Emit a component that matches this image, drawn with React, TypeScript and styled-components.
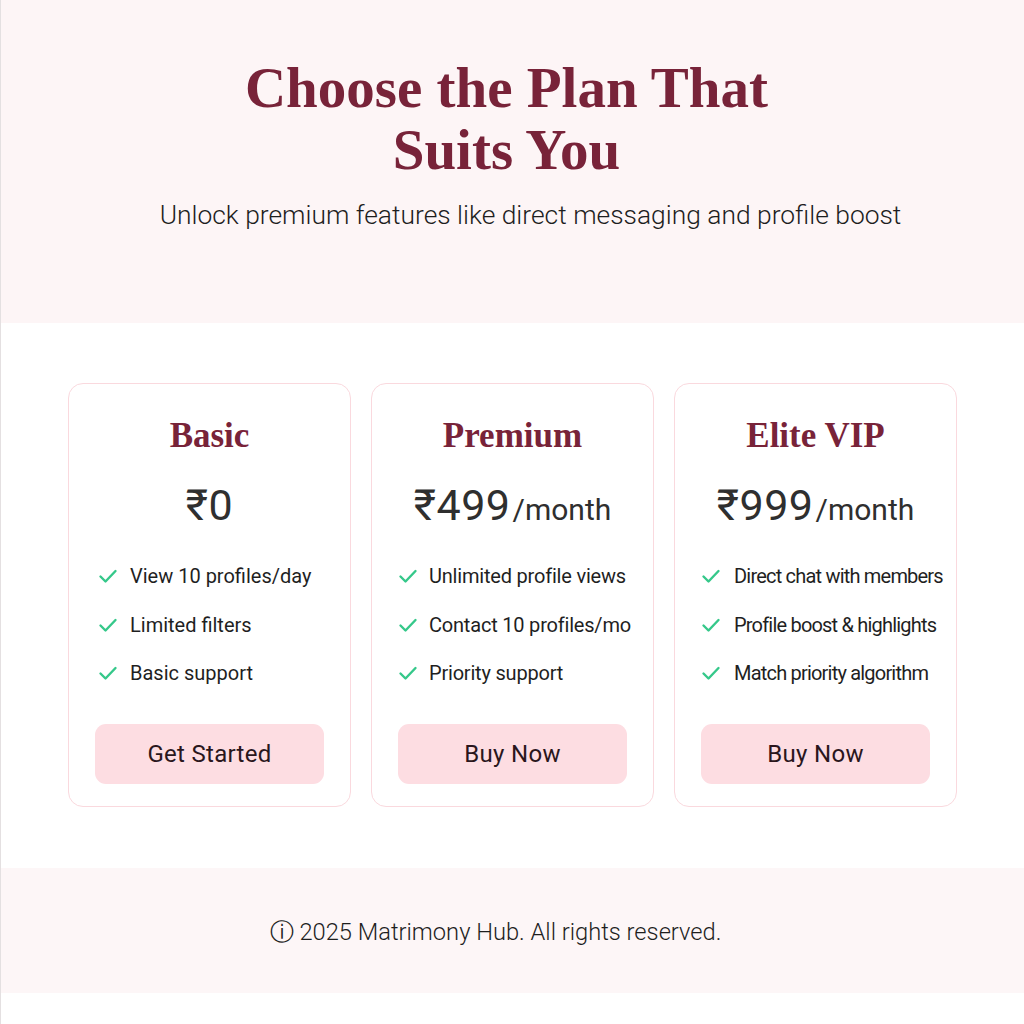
import React from "react";
import styled, { createGlobalStyle } from "styled-components";

const Global = createGlobalStyle`
  html, body { margin: 0; padding: 0; background: #ffffff; }
  body { font-family: Roboto, "Liberation Sans", sans-serif; }
  * { box-sizing: border-box; }
`;

const Page = styled.div`
  width: 1024px;
  height: 1024px;
  display: flex;
  flex-direction: column;
  background: #ffffff;
  border-left: 1px solid #e4e0e1;
`;

const Hero = styled.header`
  height: 323px;
  background: #fdf5f6;
  display: flex;
  flex-direction: column;
  align-items: center;
  padding-top: 57px;
`;

const Heading = styled.h1`
  margin: 0;
  width: 600px;
  text-align: center;
  font-family: "Liberation Serif", "DejaVu Serif", serif;
  font-weight: 700;
  font-size: 57px;
  line-height: 62px;
  color: #782339;
  transform: translateX(-6px);
`;

const Sub = styled.p`
  margin: 18px 0 0;
  font-family: Roboto, "Liberation Sans", sans-serif;
  font-weight: 300;
  font-size: 26.4px;
  line-height: 32px;
  color: #1e1e1e;
  white-space: nowrap;
  transform: translateX(18px);
`;

const Plans = styled.main`
  height: 545px;
  display: flex;
  justify-content: center;
  gap: 20px;
  padding: 60px 0 0 0;
`;

const PlanCard = styled.section`
  width: 283px;
  height: 424px;
  border: 1.5px solid #fad9de;
  border-radius: 15px;
  background: #ffffff;
  display: flex;
  flex-direction: column;
  align-items: center;
  padding: 32px 26px 22px;
`;

const PlanName = styled.h2`
  margin: 0;
  font-family: "Liberation Serif", "DejaVu Serif", serif;
  font-weight: 700;
  font-size: 35px;
  line-height: 40px;
  color: #782339;
`;

const PriceRow = styled.div`
  margin-top: 25px;
  height: 48px;
  display: flex;
  align-items: baseline;
  color: #2f2f2f;
  font-family: Roboto, "Liberation Sans", sans-serif;
`;

const Amount = styled.span`
  font-size: 43px;
  line-height: 48px;
  font-weight: 400;
  letter-spacing: 0.5px;
`;

const Period = styled.span`
  font-size: 30px;
  font-weight: 400;
  margin-left: 2px;
`;

const Features = styled.ul`
  list-style: none;
  margin: 36px 0 0;
  padding: 0;
  align-self: stretch;
  display: flex;
  flex-direction: column;
  gap: 26.5px;
`;

const Feature = styled.li<{ $indent: number; $spacing: number; $gap: number }>`
  display: flex;
  align-items: center;
  gap: ${(p) => p.$gap}px;
  padding-left: ${(p) => p.$indent}px;
  font-family: Roboto, "Liberation Sans", sans-serif;
  font-size: 20px;
  line-height: 22px;
  letter-spacing: ${(p) => p.$spacing}px;
  color: #1f1f1f;
  white-space: nowrap;
`;

const Check = styled.svg`
  width: 20px;
  height: 20px;
  flex: none;
`;

const Action = styled.button`
  margin-top: auto;
  width: 229px;
  height: 60px;
  border: none;
  border-radius: 11px;
  background: #fddde2;
  color: #2a161c;
  font-family: Roboto, "Liberation Sans", sans-serif;
  font-size: 24px;
  font-weight: 400;
  letter-spacing: 0.3px;
  cursor: pointer;
`;

const Footer = styled.footer`
  height: 125px;
  background: #fdf6f7;
  display: flex;
  align-items: center;
  justify-content: center;
`;

const FooterText = styled.p`
  margin: 0;
  font-family: Roboto, "Liberation Sans", sans-serif;
  font-weight: 300;
  font-size: 23.7px;
  color: #1e1e1e;
  white-space: nowrap;
  transform: translate(-17px, 1px);
`;

type Plan = {
  name: string;
  amount: string;
  period?: string;
  features: string[];
  cta: string;
  indent: number;
  spacing: number;
  gap: number;
};

const plans: Plan[] = [
  {
    name: "Basic",
    amount: "₹0",
    features: ["View 10 profiles/day", "Limited filters", "Basic support"],
    cta: "Get Started",
    indent: 3,
    spacing: 0,
    gap: 12,
  },
  {
    name: "Premium",
    amount: "₹499",
    period: "/month",
    features: ["Unlimited profile views", "Contact 10 profiles/mo", "Priority support"],
    cta: "Buy Now",
    indent: -2,
    spacing: -0.2,
    gap: 11,
  },
  {
    name: "Elite VIP",
    amount: "₹999",
    period: "/month",
    features: ["Direct chat with members", "Profile boost & highlights", "Match priority algorithm"],
    cta: "Buy Now",
    indent: -5,
    spacing: -0.8,
    gap: 13,
  },
];

const CheckIcon = () => (
  <Check viewBox="0 0 20 20" fill="none">
    <path d="M2.5 10.5l5 5L17.5 5" stroke="#35c88a" strokeWidth="2.4" strokeLinecap="round" strokeLinejoin="round" />
  </Check>
);

export default function App() {
  return (
    <>
      <Global />
      <Page>
        <Hero>
          <Heading>Choose the Plan That Suits You</Heading>
          <Sub>Unlock premium features like direct messaging and profile boost</Sub>
        </Hero>
        <Plans>
          {plans.map((p) => (
            <PlanCard key={p.name}>
              <PlanName>{p.name}</PlanName>
              <PriceRow>
                <Amount>{p.amount}</Amount>
                {p.period && <Period>{p.period}</Period>}
              </PriceRow>
              <Features>
                {p.features.map((f) => (
                  <Feature key={f} $indent={p.indent} $spacing={p.spacing} $gap={p.gap}>
                    <CheckIcon />
                    {f}
                  </Feature>
                ))}
              </Features>
              <Action>{p.cta}</Action>
            </PlanCard>
          ))}
        </Plans>
        <Footer>
          <FooterText>ⓘ 2025 Matrimony Hub. All rights reserved.</FooterText>
        </Footer>
      </Page>
    </>
  );
}
